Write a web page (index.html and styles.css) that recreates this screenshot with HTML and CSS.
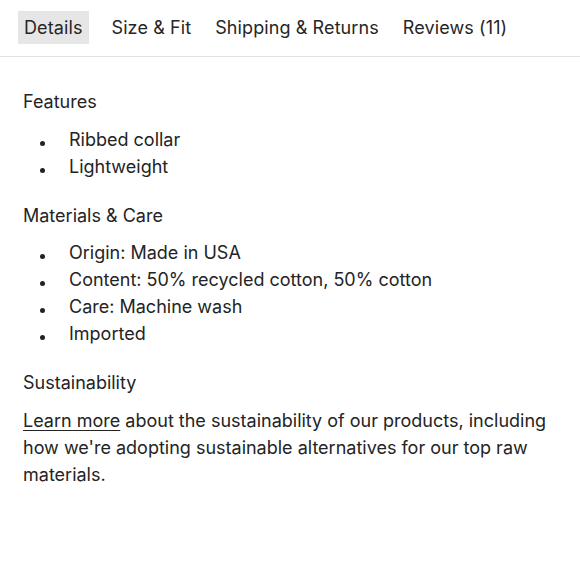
FILE: index.html
```html
<!DOCTYPE html>
<html>
<head>
<meta charset="utf-8">
<link rel="stylesheet" href="styles.css">
</head>
<body>
<nav class="tabs">
  <span class="tab tab-active">Details</span>
  <span class="tab">Size &amp; Fit</span>
  <span class="tab">Shipping &amp; Returns</span>
  <span class="tab">Reviews (11)</span>
</nav>
<main class="content">
  <h3 class="heading">Features</h3>
  <ul class="list">
    <li>Ribbed collar</li>
    <li>Lightweight</li>
  </ul>
  <h3 class="heading">Materials &amp; Care</h3>
  <ul class="list">
    <li>Origin: Made in USA</li>
    <li>Content: 50% recycled cotton, 50% cotton</li>
    <li>Care: Machine wash</li>
    <li>Imported</li>
  </ul>
  <h3 class="heading">Sustainability</h3>
  <p class="para"><a class="link" href="#">Learn more</a> about the sustainability of our products, including how we're adopting sustainable alternatives for our top raw materials.</p>
</main>
</body>
</html>
```
FILE: styles.css
```css
html, body {
  margin: 0;
  padding: 0;
  background: #fff;
}
body {
  font-family: Inter, "Noto Sans", sans-serif;
  color: #242424;
  font-size: 18px;
}
.tabs {
  display: flex;
  align-items: center;
  gap: 12px;
  padding: 11px 0 12px 18px;
  border-bottom: 1px solid #e2e2e2;
}
.tab {
  display: block;
  height: 33px;
  line-height: 33px;
  padding: 0 6px;
  font-size: 18px;
  letter-spacing: 0.1px;
  color: #262626;
}
.tab-active {
  background: #e6e6e6;
  margin-right: 5px;
}
.content {
  padding: 31px 23px 0;
}
.heading {
  margin: 0 0 10.5px;
  font-weight: 400;
  font-size: 18px;
  line-height: 27px;
}
.list {
  list-style: none;
  margin: 0 0 22px;
  padding: 0;
}
.list li {
  position: relative;
  padding-left: 46px;
  line-height: 27px;
}
.list li::before {
  content: "";
  position: absolute;
  left: 17px;
  top: 15px;
  width: 5px;
  height: 5px;
  border-radius: 50%;
  background: #222;
}
.para {
  margin: 0;
  line-height: 27px;
}
.link {
  color: inherit;
  text-decoration: underline;
  text-underline-offset: 3px;
  text-decoration-thickness: 1px;
}
```
